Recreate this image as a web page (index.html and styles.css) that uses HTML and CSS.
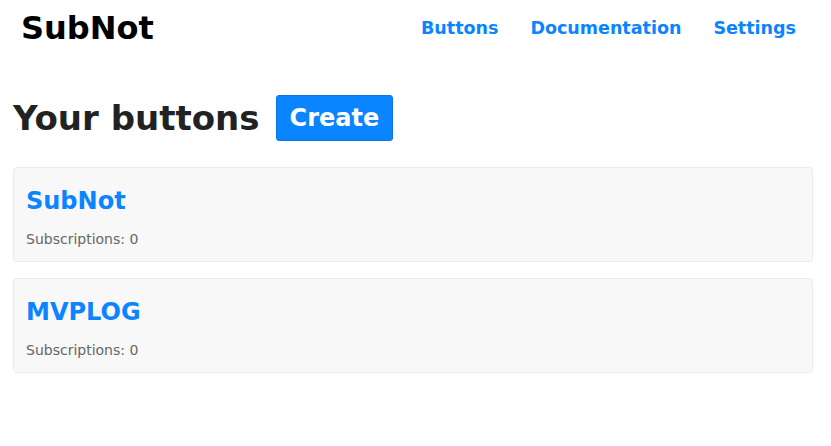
FILE: index.html
```html
<!DOCTYPE html>
<html lang="en">
<head>
  <meta charset="UTF-8">
  <meta name="viewport" content="width=device-width, initial-scale=1.0">
  <title>SubNot</title>
  <link rel="stylesheet" href="styles.css">
</head>
<body>
  <!-- Top bar -->
  <header class="top-bar">
    <a class="brand" href="#">SubNot</a>
    <nav class="nav-links">
      <a class="nav-item" href="#">Buttons</a>
      <a class="nav-item" href="#">Documentation</a>
      <a class="nav-item" href="#">Settings</a>
    </nav>
  </header>

  <main class="content">
    <div class="page-head">
      <h1 class="page-title">Your buttons</h1>
      <button class="create-btn">Create</button>
    </div>

    <div class="button-list">
      <div class="button-card">
        <a class="card-title" href="#">SubNot</a>
        <div class="card-meta">Subscriptions: 0</div>
      </div>
      <div class="button-card">
        <a class="card-title" href="#">MVPLOG</a>
        <div class="card-meta">Subscriptions: 0</div>
      </div>
    </div>
  </main>
</body>
</html>
```

FILE: styles.css
```css
/* Global */
body, html {
  margin: 0;
  padding: 0;
  background: #fff;
  font-family: "DejaVu Sans", sans-serif;
}

a {
  text-decoration: none;
}

/* Top bar */
.top-bar {
  display: flex;
  justify-content: space-between;
  align-items: center;
  height: 56px;
  padding: 0 35px 0 21px;
}

.brand {
  font-size: 32px;
  font-weight: bold;
  color: #000;
}

.nav-links {
  display: flex;
  gap: 32px;
}

.nav-item {
  font-size: 17.5px;
  font-weight: bold;
  color: #0a84ff;
}

/* Content */
.content {
  padding: 0 18px 0 13px;
}

.page-head {
  display: flex;
  align-items: center;
  gap: 16px;
  margin-top: 39px;
  margin-bottom: 26px;
}

.page-title {
  margin: 0;
  font-size: 34px;
  color: #222;
}

.create-btn {
  height: 46px;
  padding: 0 13px;
  background-color: #0a84ff;
  color: white;
  border: 1px solid #0877e6;
  border-radius: 3px;
  font-family: inherit;
  font-size: 24px;
  font-weight: bold;
}

.button-list {
  display: flex;
  flex-direction: column;
  gap: 16px;
}

.button-card {
  background-color: #f8f8f8;
  border: 1px solid #ebebeb;
  border-radius: 4px;
  padding: 19px 12px 10px;
  height: 95px;
  box-sizing: border-box;
}

.card-title {
  display: block;
  font-size: 24px;
  font-weight: bold;
  color: #0a84ff;
}

.card-meta {
  margin-top: 16px;
  font-size: 14px;
  color: #666;
}
```
